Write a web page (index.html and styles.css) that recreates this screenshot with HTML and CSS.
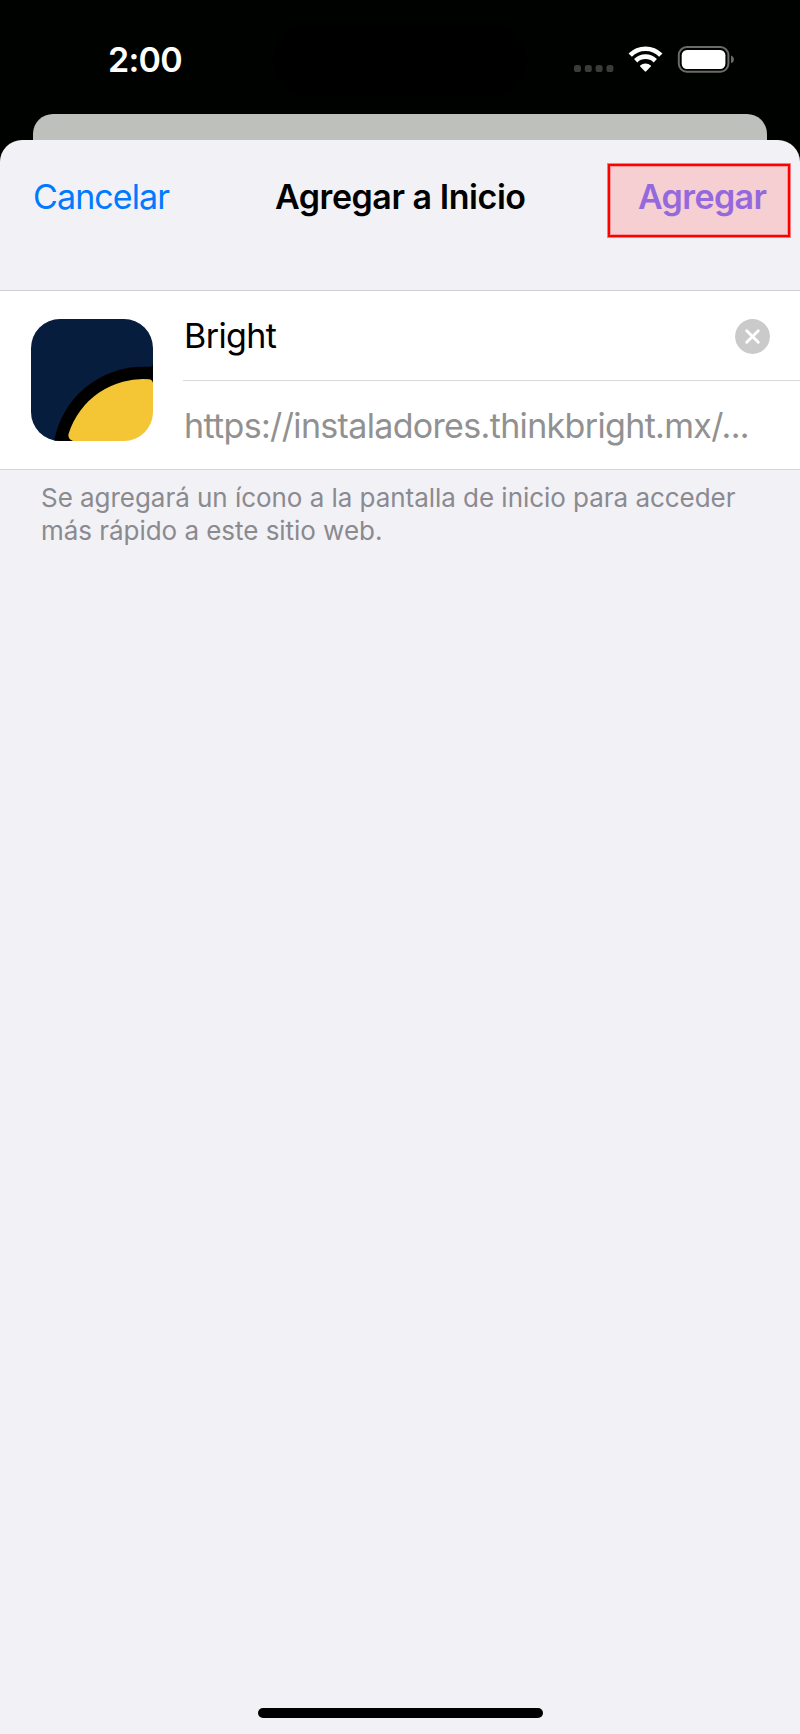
FILE: index.html
```html
<!DOCTYPE html>
<html lang="es">
<head>
<meta charset="utf-8">
<title>Agregar a Inicio</title>
<link rel="stylesheet" href="styles.css">
</head>
<body>
<div class="screen">
  <header class="status">
    <div class="status-row">
      <span class="time">2:00</span>
      <span class="island"></span>
      <svg class="status-icons" width="164" height="28" viewBox="0 0 164 28" aria-hidden="true">
        <g fill="#3a3c39"><rect x="2" y="19" width="7" height="7" rx="2.6"/><rect x="12.8" y="19" width="7" height="7" rx="2.6"/><rect x="23.6" y="19" width="7" height="7" rx="2.6"/><rect x="34.4" y="19" width="7" height="7" rx="2.6"/></g>
        <g transform="translate(56 0)">
          <g fill="none" stroke="#fff" stroke-width="4.7">
            <path d="M2.2 9.1a21.6 21.6 0 0 1 30.6 0"/>
            <path d="M7.7 14.7a14 14 0 0 1 19.6 0"/>
          </g>
          <path fill="#fff" d="M12.2 19.6a7.5 7.5 0 0 1 10.6 0q.5.5 0 1l-4.6 4.7q-.7.7-1.4 0l-4.6-4.7q-.5-.5 0-1z"/>
        </g>
        <rect x="106.8" y="1.1" width="49.6" height="24.6" rx="8" fill="none" stroke="#6a6c69" stroke-width="2"/>
        <rect x="109.7" y="4" width="43.7" height="19" rx="5.2" fill="#fff"/>
        <path d="M159 9.6q3 1.2 3 3.8t-3 3.8z" fill="#6a6c69"/>
      </svg>
    </div>
    <div class="backdrop"></div>
  </header>
  <main class="sheet">
    <nav class="bar">
      <span class="cancel">Cancelar</span>
      <h1 class="title">Agregar a Inicio</h1>
      <span class="add">Agregar</span>
    </nav>
    <section class="form">
      <svg class="app-icon" viewBox="0 0 122 122" aria-hidden="true">
        <defs><clipPath id="tile"><rect width="122" height="122" rx="29"/></clipPath></defs>
        <g clip-path="url(#tile)">
          <path d="M0 0H122V55L40 122H0z" fill="#071d3d"/>
          <path d="M23.1 122A90.3 90.3 0 0 1 112 47.8H119Q121 47.8 122 45.5V66L100 70L60 100L45 122z"/>
          <path d="M42 122Q36.5 120 37.5 115A78 78 0 0 1 118 60.3Q121 60.3 122 64V122z" fill="#f4c534"/>
        </g>
      </svg>
      <div class="fields">
        <div class="field">
          <span class="name">Bright</span>
          <svg class="clear" viewBox="0 0 35 35" aria-hidden="true"><circle cx="17.5" cy="17.5" r="17.4" fill="#cacaca"/><path d="M11.7 11.7l11.6 11.6M23.3 11.7L11.7 23.3" stroke="#fff" stroke-width="2.9" stroke-linecap="round"/></svg>
        </div>
        <div class="field"><span class="url">https://instaladores.thinkbright.mx/...</span></div>
      </div>
    </section>
    <p class="note">Se agregará un ícono a la pantalla de inicio para acceder<br>más rápido a este sitio web.</p>
    <div class="home"></div>
  </main>
</div>
</body>
</html>
```
FILE: styles.css
```css
* { box-sizing: border-box; }
body { margin: 0; background: #000; font-family: Inter, sans-serif; }
.screen { width: 800px; height: 1734px; display: flex; flex-direction: column; background: #000200; }
.status { height: 140px; display: flex; flex-direction: column; }
.status-row { height: 114px; padding: 23px 64px 17px 108px; display: flex; align-items: flex-start; flex: none; }
.time { width: 165px; color: #fff; font-size: 34px; font-weight: 600; line-height: 74px; letter-spacing: -0.7px; }
.island { width: 254px; height: 74px; border-radius: 37px; background: #000; }
.status-icons { margin: 23px 0 0 45px; flex: none; }
.backdrop { height: 46px; flex: none; margin: 0 33px; border-radius: 20px 20px 0 0; background: #bec0bc; }
.sheet { position: relative; flex: 1; display: flex; flex-direction: column; border-radius: 22px 22px 0 0; background: #f2f1f6; }
.bar { height: 150px; padding: 24px 10px 0 33px; display: flex; justify-content: space-between; align-items: flex-start; white-space: nowrap; }
.cancel { width: 242px; color: #007aff; font-size: 34px; line-height: 66px; letter-spacing: -0.9px; }
.title { flex: 1; margin: 0; color: #000; font-size: 34px; font-weight: 600; line-height: 66px; letter-spacing: -0.45px; }
.add { width: 182px; height: 73px; padding-left: 28px; border: 2px solid #f00; box-shadow: 0 0 0 1px #f97c7f, inset 0 0 0 1px #f89a9c; background: #f5cfd2; color: #9469de; font-size: 34px; font-weight: 600; line-height: 62px; letter-spacing: -0.6px; }
.form { height: 180px; display: flex; padding-left: 31px; gap: 30px; border-top: 1px solid #d0cfd4; border-bottom: 1px solid #d5d4d8; background: #fff; }
.app-icon { width: 122px; height: 122px; margin-top: 28px; flex: none; }
.fields { flex: 1; min-width: 0; display: flex; flex-direction: column; white-space: nowrap; }
.field { height: 89px; padding: 2px 30px 0 1px; display: flex; justify-content: space-between; align-items: center; font-size: 34px; }
.field:first-child { height: 90px; padding-top: 1px; border-bottom: 1px solid #d9d9dc; }
.name { color: #000; letter-spacing: -0.6px; }
.clear { width: 35px; height: 35px; margin-top: 1px; }
.url { color: #919191; letter-spacing: -0.66px; }
.note { margin: 12px 41px 0; color: #8a8a8f; font-size: 26px; line-height: 32.5px; letter-spacing: -0.04px; white-space: nowrap; }
.home { width: 285px; height: 10px; margin: auto auto 16px 258px; border-radius: 5px; background: #000; }
```
